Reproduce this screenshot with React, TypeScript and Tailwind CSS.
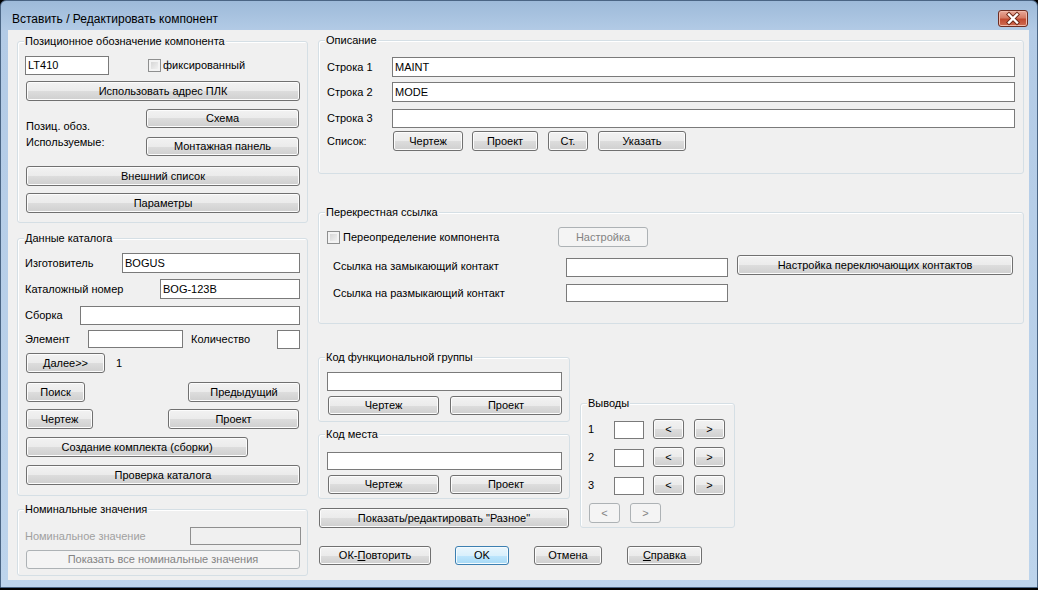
import React from "react";

type P = { className?: string; children?: React.ReactNode };

const btnLook =
  "border-[#707070] bg-[linear-gradient(to_bottom,#f2f2f2_0%,#ebebeb_50%,#dddddd_50%,#cfcfcf_100%)] shadow-[inset_0_0_0_1px_#fcfcfc]";
const btnOff = "border-[#adb2b5] bg-[#f4f4f4] text-[#838383]";
const btnDef =
  "border-[#3c7fb1] bg-[linear-gradient(to_bottom,#eaf6fd_0%,#d9f0fc_50%,#bee6fd_50%,#a7d9f5_100%)] shadow-[inset_0_0_0_1px_#f4fbfe]";

const Btn = ({ className = "", children, off, def }: P & { off?: boolean; def?: boolean }) => (
  <div
    className={`flex shrink-0 items-center justify-center rounded-[3px] border ${
      off ? btnOff : def ? btnDef : btnLook
    } ${className}`}
  >
    {children}
  </div>
);

const Field = ({ className = "", children, off }: P & { off?: boolean }) => (
  <div
    className={`flex shrink-0 items-center border pl-[2px] ${
      off ? "border-[#8f8f8f] bg-[#f0f0f0]" : "border-[#7a7a7a] bg-white"
    } ${className}`}
  >
    {children}
  </div>
);

const Check = ({ className = "" }: P) => (
  <div
    className={`h-[13px] w-[13px] shrink-0 border border-[#8e8f8f] bg-[linear-gradient(135deg,#cfcfcf,#f8f8f8)] shadow-[inset_0_0_0_2px_#f3f3f3] ${className}`}
  />
);

const Group = ({ label, className = "", children }: P & { label: string }) => (
  <div
    className={`relative shrink-0 rounded-[3px] border border-[#d5dfe5] shadow-[inset_1px_1px_0_#ffffff] ${className}`}
  >
    <span className="absolute -top-[7px] left-[6px] bg-[#f0f0f0] px-[1px] leading-[13px]">{label}</span>
    {children}
  </div>
);

const CloseGlyph = () => (
  <svg width="30" height="17" viewBox="0 0 30 17">
    <path d="M11 4.5 L19 12.5 M19 4.5 L11 12.5" stroke="#6b2616" strokeWidth="4.2" strokeLinecap="square" />
    <path d="M11 4.5 L19 12.5 M19 4.5 L11 12.5" stroke="#ffffff" strokeWidth="2.4" strokeLinecap="square" />
  </svg>
);

export default function App() {
  return (
    <div className="h-[590px] w-[1038px] overflow-hidden bg-black font-['Liberation_Sans',Arial,sans-serif] text-[11px] leading-[13px] text-black">
      <div className="flex h-[588px] w-[1038px] flex-col rounded-t-[6px] border border-[#4a6584] bg-[linear-gradient(to_bottom,#9dbad9_0px,#b3cbe6_30px,#bdd4ec_100%)]">
        {/* title bar */}
        <div className="flex h-[29px] shrink-0 items-start">
          <span className="ml-[11px] mt-[10px] text-[12px] leading-[16px]">Вставить / Редактировать компонент</span>
          <div className="ml-auto mr-[9px] mt-[9px] h-[17px] w-[30px] rounded-[3px] border border-[#6d2d22] bg-[linear-gradient(to_bottom,#e9a99a_0%,#d67c66_45%,#c14a31_55%,#cf6c52_100%)] shadow-[inset_0_0_0_1px_#f0b9aa]">
            <div className="-ml-px -mt-px">
              <CloseGlyph />
            </div>
          </div>
        </div>

        {/* client area */}
        <div className="ml-[7px] flex h-[550px] w-[1021px] shrink-0 items-start bg-[#f0f0f0]">
          {/* left column */}
          <div className="ml-[9px] flex w-[291px] flex-col">
            <Group label="Позиционное обозначение компонента" className="mt-[11px] h-[182px]">
              <div className="ml-[7px] mt-[14px] flex h-[19px] items-center">
                <Field className="h-[19px] w-[84px]">LT410</Field>
                <Check className="ml-[39px]" />
                <span className="ml-[2px]">фиксированный</span>
              </div>
              <Btn className="ml-[8px] mt-[6px] h-[20px] w-[274px]">Использовать адрес ПЛК</Btn>
              <div className="ml-[8px] mt-[8px] flex">
                <div className="flex w-[120px] flex-col gap-[3px] pt-[11px]">
                  <span>Позиц. обоз.</span>
                  <span>Используемые:</span>
                </div>
                <div className="flex flex-col gap-[9px]">
                  <Btn className="h-[19px] w-[153px]">Схема</Btn>
                  <Btn className="h-[19px] w-[153px]">Монтажная панель</Btn>
                </div>
              </div>
              <Btn className="ml-[8px] mt-[10px] h-[20px] w-[274px]">Внешний список</Btn>
              <Btn className="ml-[8px] mt-[7px] h-[20px] w-[274px]">Параметры</Btn>
            </Group>

            <Group label="Данные каталога" className="mt-[15px] h-[258px]">
              <div className="ml-[7px] mt-[14px] flex h-[20px] items-center">
                <span className="w-[97px]">Изготовитель</span>
                <Field className="h-[20px] w-[178px]">BOGUS</Field>
              </div>
              <div className="ml-[7px] mt-[6px] flex h-[20px] items-center">
                <span className="w-[135px]">Каталожный номер</span>
                <Field className="h-[20px] w-[140px]">BOG-123B</Field>
              </div>
              <div className="ml-[7px] mt-[6px] flex h-[20px] items-center">
                <span className="w-[55px]">Сборка</span>
                <Field className="h-[19px] w-[220px]" />
              </div>
              <div className="ml-[7px] mt-[4px] flex h-[20px] items-center">
                <span className="w-[63px]">Элемент</span>
                <Field className="h-[18px] w-[95px]" />
                <span className="ml-[8px] w-[86px]">Количество</span>
                <Field className="h-[19px] w-[23px]" />
              </div>
              <div className="ml-[8px] mt-[4px] flex h-[20px] items-center">
                <Btn className="h-[20px] w-[79px]">Далее&gt;&gt;</Btn>
                <span className="ml-[11px]">1</span>
              </div>
              <div className="ml-[8px] mt-[9px] flex h-[20px] items-center">
                <Btn className="h-[20px] w-[59px]">Поиск</Btn>
                <Btn className="ml-[103px] h-[20px] w-[112px]">Предыдущий</Btn>
              </div>
              <div className="ml-[8px] mt-[7px] flex h-[20px] items-center">
                <Btn className="h-[20px] w-[67px]">Чертеж</Btn>
                <Btn className="ml-[75px] h-[20px] w-[131px]">Проект</Btn>
              </div>
              <Btn className="ml-[8px] mt-[8px] h-[20px] w-[222px]">Создание комплекта (сборки)</Btn>
              <Btn className="ml-[8px] mt-[8px] h-[20px] w-[274px]">Проверка каталога</Btn>
            </Group>

            <Group label="Номинальные значения" className="mt-[13px] h-[67px]">
              <div className="ml-[7px] mt-[17px] flex h-[18px] items-center">
                <span className="w-[165px] text-[#a0a0a0]">Номинальное значение</span>
                <Field off className="h-[18px] w-[111px]" />
              </div>
              <Btn off className="ml-[8px] mt-[5px] h-[19px] w-[274px]">
                Показать все номинальные значения
              </Btn>
            </Group>
          </div>

          {/* right column */}
          <div className="ml-[10px] flex w-[706px] flex-col">
            <Group label="Описание" className="mt-[10px] h-[134px]">
              <div className="ml-[8px] mt-[16px] flex h-[20px] items-center">
                <span className="w-[65px]">Строка 1</span>
                <Field className="h-[20px] w-[623px]">MAINT</Field>
              </div>
              <div className="ml-[8px] mt-[5px] flex h-[20px] items-center">
                <span className="w-[65px]">Строка 2</span>
                <Field className="h-[20px] w-[623px]">MODE</Field>
              </div>
              <div className="ml-[8px] mt-[6px] flex h-[20px] items-center">
                <span className="w-[65px]">Строка 3</span>
                <Field className="h-[19px] w-[623px]" />
              </div>
              <div className="ml-[8px] mt-[3px] flex h-[20px] items-center">
                <span className="w-[66px]">Список:</span>
                <Btn className="h-[20px] w-[70px]">Чертеж</Btn>
                <Btn className="ml-[9px] h-[20px] w-[66px]">Проект</Btn>
                <Btn className="ml-[10px] h-[20px] w-[40px]">Ст.</Btn>
                <Btn className="ml-[10px] h-[20px] w-[88px]">Указать</Btn>
              </div>
            </Group>

            <Group label="Перекрестная ссылка" className="mt-[38px] h-[112px]">
              <div className="ml-[8px] mt-[14px] flex h-[20px] items-center">
                <div className="flex w-[231px] items-center">
                  <Check />
                  <span className="ml-[3px]">Переопределение компонента</span>
                </div>
                <Btn off className="h-[20px] w-[90px]">
                  Настройка
                </Btn>
              </div>
              <div className="ml-[14px] mt-[8px] flex h-[22px] items-start">
                <span className="mt-[5px] w-[233px]">Ссылка на замыкающий контакт</span>
                <Field className="mt-[3px] h-[19px] w-[162px]" />
                <Btn className="ml-[9px] h-[20px] w-[276px]">Настройка переключающих контактов</Btn>
              </div>
              <div className="ml-[14px] mt-[7px] flex h-[18px] items-center">
                <span className="w-[233px]">Ссылка на размыкающий контакт</span>
                <Field className="h-[18px] w-[162px]" />
              </div>
            </Group>

            <div className="mt-[33px] flex items-start">
              <div className="flex w-[252px] flex-col">
                <Group label="Код функциональной группы" className="h-[65px]">
                  <Field className="ml-[8px] mt-[14px] h-[19px] w-[235px]" />
                  <div className="ml-[9px] mt-[5px] flex">
                    <Btn className="h-[19px] w-[111px]">Чертеж</Btn>
                    <Btn className="ml-[11px] h-[19px] w-[112px]">Проект</Btn>
                  </div>
                </Group>
                <Group label="Код места" className="mt-[12px] h-[65px]">
                  <Field className="ml-[8px] mt-[17px] h-[18px] w-[235px]" />
                  <div className="ml-[9px] mt-[5px] flex">
                    <Btn className="h-[19px] w-[111px]">Чертеж</Btn>
                    <Btn className="ml-[11px] h-[19px] w-[112px]">Проект</Btn>
                  </div>
                </Group>
                <Btn className="ml-[1px] mt-[9px] h-[20px] w-[250px]">Показать/редактировать "Разное"</Btn>
              </div>

              <Group label="Выводы" className="ml-[10px] mt-[46px] h-[125px] w-[155px]">
                {["1", "2", "3"].map((n, i) => (
                  <div key={n} className={`ml-[7px] flex h-[20px] items-center ${i === 0 ? "mt-[15px]" : "mt-[8px]"}`}>
                    <span className="w-[26px]">{n}</span>
                    <Field className="mt-[2px] h-[18px] w-[30px]" />
                    <Btn className="ml-[9px] h-[20px] w-[31px]">&lt;</Btn>
                    <Btn className="ml-[10px] h-[20px] w-[31px]">&gt;</Btn>
                  </div>
                ))}
                <div className="ml-[8px] mt-[8px] flex h-[20px]">
                  <Btn off className="h-[20px] w-[31px]">
                    &lt;
                  </Btn>
                  <Btn off className="ml-[10px] h-[20px] w-[31px]">
                    &gt;
                  </Btn>
                </div>
              </Group>
            </div>

            <div className="ml-[1px] mt-[18px] flex">
              <Btn className="h-[19px] w-[112px]">
                <span>
                  ОК-<span className="underline">П</span>овторить
                </span>
              </Btn>
              <Btn def className="ml-[24px] h-[19px] w-[54px]">
                OK
              </Btn>
              <Btn className="ml-[25px] h-[19px] w-[68px]">Отмена</Btn>
              <Btn className="ml-[25px] h-[19px] w-[75px]">
                <span>
                  <span className="underline">С</span>правка
                </span>
              </Btn>
            </div>
          </div>
        </div>
      </div>
    </div>
  );
}
